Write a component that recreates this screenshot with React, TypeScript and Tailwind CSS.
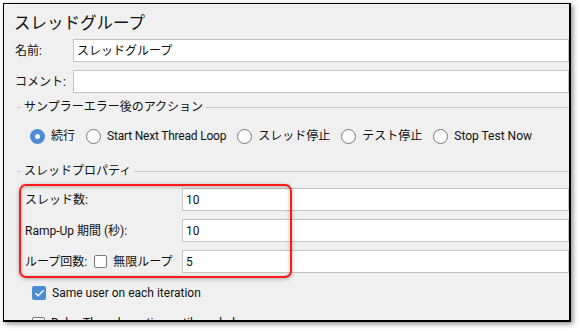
import { Check } from "lucide-react";

function Radio({ checked }: { checked?: boolean }) {
  return checked ? (
    <span className="w-[15px] h-[15px] rounded-full bg-[#4d8bd4] flex items-center justify-center shrink-0">
      <span className="w-[5px] h-[5px] rounded-full bg-white" />
    </span>
  ) : (
    <span className="w-[15px] h-[15px] rounded-full border border-[#7a7a7a] bg-[#fbfbfb] shrink-0" />
  );
}

function Box({ checked }: { checked?: boolean }) {
  return checked ? (
    <span className="w-[14px] h-[14px] rounded-[2px] bg-[#4d8bd4] flex items-center justify-center shrink-0">
      <Check className="text-white" style={{ width: 11, height: 11 }} strokeWidth={3} />
    </span>
  ) : (
    <span className="w-[13px] h-[13px] rounded-[2px] border border-[#7a7a7a] bg-white shrink-0" />
  );
}

function Field({ value }: { value?: string }) {
  return (
    <div className="flex-1 h-[23px] bg-white border border-[#c4c4c4] pl-[3px] flex items-center">
      {value}
    </div>
  );
}

function Legend({ title }: { title: string }) {
  return (
    <div className="h-[16px] flex items-center pl-[13px]">
      <div className="w-[4px] border-t border-[#c8c8c8]" />
      <span className="px-[3px]">{title}</span>
      <div className="flex-1 border-t border-[#c8c8c8]" />
    </div>
  );
}

export default function App() {
  const actions = ["続行", "Start Next Thread Loop", "スレッド停止", "テスト停止", "Stop Test Now"];
  return (
    <div
      className="w-[580px] h-[331px] bg-white overflow-hidden text-[12px] text-[#111] whitespace-nowrap"
      style={{ fontFamily: 'Roboto, "Noto Sans CJK JP", sans-serif' }}
    >
      <div className="relative ml-[3px] mt-[3px] w-[568px] h-[319px] bg-[#f0f0f0] border-t border-l border-r-2 border-b-2 border-black overflow-hidden shadow-[2px_2px_5px_rgba(0,0,0,0.45)]">
        <div className="mt-[8px] h-[24px] pl-[10px] text-[16.5px] leading-[24px]">スレッドグループ</div>

        <div className="mt-[3px] pl-[11px] flex items-center">
          <span className="w-[58px] shrink-0">名前:</span>
          <Field value="スレッドグループ" />
        </div>
        <div className="mt-[8px] pl-[11px] flex items-center">
          <span className="w-[58px] shrink-0">コメント:</span>
          <Field />
        </div>

        <div className="mt-[6px]">
          <Legend title="サンプラーエラー後のアクション" />
        </div>
        <div className="mt-[13px] h-[16px] pl-[26px] flex items-center gap-[11px]">
          {actions.map((a, i) => (
            <label key={a} className="flex items-center gap-[6px] shrink-0">
              <Radio checked={i === 0} />
              <span className={i === 1 ? "tracking-[-0.2px]" : ""}>{a}</span>
            </label>
          ))}
        </div>

        <div className="mt-[19px]">
          <Legend title="スレッドプロパティ" />
        </div>
        <div className="mt-[9px] pl-[21px] flex items-center">
          <span className="w-[157px] shrink-0">スレッド数:</span>
          <Field value="10" />
        </div>
        <div className="mt-[8px] pl-[21px] flex items-center">
          <span className="w-[157px] shrink-0">Ramp-Up 期間 (秒):</span>
          <Field value="10" />
        </div>
        <div className="mt-[8px] pl-[21px] flex items-center">
          <div className="w-[157px] shrink-0 flex items-center">
            <span>ループ回数:</span>
            <span className="ml-[7px] flex items-center gap-[6px]">
              <Box />
              <span>無限ループ</span>
            </span>
          </div>
          <Field value="5" />
        </div>

        <div className="mt-[13px] pl-[28px] h-[14px] flex items-center gap-[6px]">
          <Box checked />
          <span>Same user on each iteration</span>
        </div>
        <div className="mt-[16px] pl-[28px] h-[14px] flex items-center gap-[6px]">
          <Box />
          <span>Delay Thread creation until needed</span>
        </div>

        <div className="absolute left-[15px] top-[180px] w-[273px] h-[94px] rounded-[7px] border-2 border-[#ff1a1a] shadow-[0_1px_4px_rgba(0,0,0,0.3),inset_0_1px_4px_rgba(0,0,0,0.25)]" />
      </div>
    </div>
  );
}
